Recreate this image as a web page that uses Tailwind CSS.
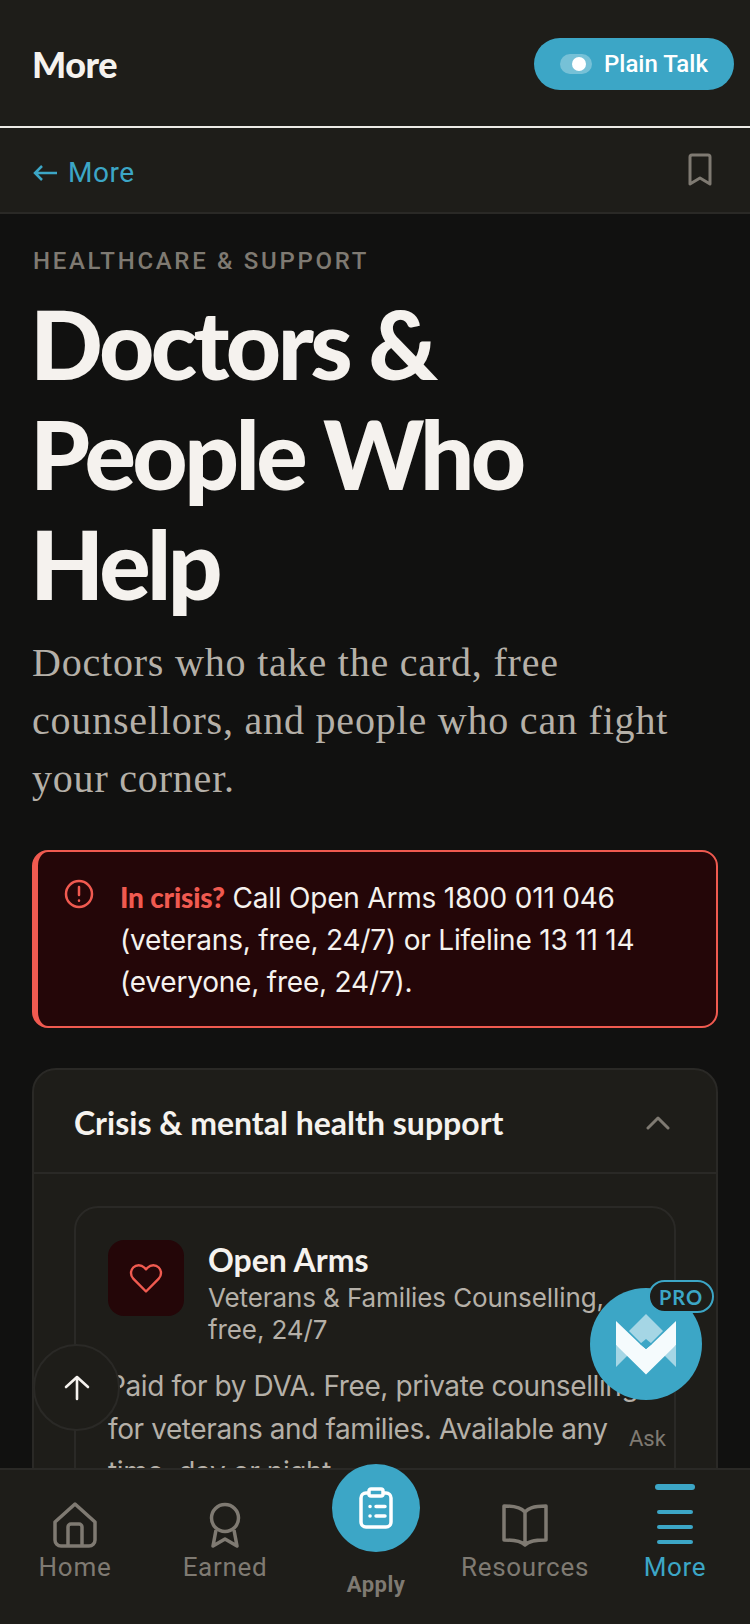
<!DOCTYPE html>
<html lang="en">
<head>
<meta charset="UTF-8">
<meta name="viewport" content="width=device-width, initial-scale=1.0">
<title>Doctors &amp; People Who Help</title>
<script src="https://cdn.jsdelivr.net/npm/@tailwindcss/browser@4"></script>
</head>
<body class="relative h-[1624px] w-[750px] overflow-hidden bg-[#111110] font-['Inter',sans-serif] text-[#f5f2ee]">
  <!-- Top bar -->
  <header class="flex h-[128px] items-center justify-between border-b-2 border-[#eceae6] bg-[#1e1d19] pt-[2px] pl-[32px] pr-[16px]">
    <span class="font-['Lato',sans-serif] text-[36px] font-black tracking-[-0.5px]">More</span>
    <button class="flex h-[52px] w-[200px] items-center gap-[12px] rounded-full bg-[#3ca6c6] pl-[26px] font-['Roboto',sans-serif] text-[24px] font-medium text-white">
      <span class="flex h-[20px] w-[32px] items-center justify-end rounded-full bg-white/30 pr-[6px]"><span class="h-[14px] w-[14px] rounded-full bg-white"></span></span>
      Plain Talk
    </button>
  </header>

  <!-- Back row -->
  <div class="flex h-[86px] items-center justify-between border-b-2 border-[#2a2926] bg-[#1e1d19] pt-[5px] pl-[33px] pr-[36px]">
    <span class="flex items-center gap-[11px] font-['Roboto',sans-serif] text-[28px] tracking-[0.5px] text-[#3ca6c6]">
      <svg class="h-[18px] w-[24px]" viewBox="0 0 24 18" fill="none" stroke="#3ca6c6" stroke-width="2.500"><path d="M24 9H2M9 2 2 9l7 7"/></svg>
      More
    </span>
    <svg class="mt-[-5px] h-[34px] w-[28px]" viewBox="0 0 28 34" fill="none" stroke="#7f7a72" stroke-width="3" stroke-linejoin="round"><path d="M4 4a2 2 0 0 1 2-2h16a2 2 0 0 1 2 2v27l-10-6-10 6z"/></svg>
  </div>

  <main class="px-[32px] pt-[31px]">
    <p class="pl-[1px] font-['Roboto',sans-serif] text-[24px] leading-[32px] font-medium tracking-[2.7px] text-[#7f7a72]">HEALTHCARE &amp; SUPPORT</p>
    <h1 class="mt-[11px] ml-[-2px] font-['Lato',sans-serif] text-[96px] leading-[110px] font-black tracking-[-3.6px] text-[#f5f2ee]">Doctors &amp; People Who Help</h1>
    <p class="mt-[16px] font-['Liberation_Serif',serif] text-[40px] leading-[58px] tracking-[0.8px] text-[#b5b0a8]">Doctors who take the card, free counsellors, and people who can fight your corner.</p>

    <!-- Crisis alert -->
    <div class="mt-[42px] flex gap-[26px] rounded-[16px] border-2 border-l-[6px] border-[#f05a50] bg-[#240608] pt-[24px] pr-[20px] pb-[23px] pl-[26px]">
      <svg class="mt-[3px] h-[30px] w-[30px] shrink-0" viewBox="0 0 30 30" fill="none" stroke="#f05a50" stroke-width="2.500" stroke-linecap="round"><circle cx="15" cy="15" r="13"/><path d="M15 8v8M15 21.500v.2"/></svg>
      <p class="text-[28px] leading-[42px] tracking-[-0.2px]"><span class="font-['Lato',sans-serif] font-black text-[#f05a50]">In crisis?</span> Call Open Arms 1800 011 046 (veterans, free, 24/7) or Lifeline 13 11 14 (everyone, free, 24/7).</p>
    </div>

    <!-- Accordion -->
    <section class="mt-[40px] rounded-[24px] border-2 border-[#2a2926] bg-[#1e1d19]">
      <div class="flex h-[104px] items-center justify-between border-b-2 border-[#2a2926] pt-[3px] pr-[46px] pl-[40px]">
        <h2 class="font-['Lato',sans-serif] text-[32px] font-bold">Crisis &amp; mental health support</h2>
        <svg class="h-[14px] w-[24px]" viewBox="0 0 24 14" fill="none" stroke="#7f7a72" stroke-width="3" stroke-linecap="round" stroke-linejoin="round"><path d="M2 12 12 2l10 10"/></svg>
      </div>
      <div class="p-[32px_40px]">
        <article class="rounded-[24px] border-2 border-[#2a2926] p-[32px]">
          <div class="flex gap-[24px]">
            <div class="flex h-[76px] w-[76px] shrink-0 items-center justify-center rounded-[16px] bg-[#240608]">
              <svg class="h-[36px] w-[36px]" viewBox="0 0 24 24" fill="none" stroke="#f05a50" stroke-width="1.600" stroke-linejoin="round"><path d="M12 21 3.500 12.400a5.300 5.300 0 0 1 0-7.400 5.100 5.100 0 0 1 7.300 0L12 6.200 13.200 5a5.100 5.100 0 0 1 7.300 0 5.300 5.300 0 0 1 0 7.400z"/></svg>
            </div>
            <div>
              <h3 class="font-['Lato',sans-serif] text-[32px] leading-[40px] font-bold">Open Arms</h3>
              <p class="mt-[2px] text-[26px] leading-[32px] tracking-[-0.1px] text-[#b5b0a8]">Veterans &amp; Families Counselling, free, 24/7</p>
            </div>
          </div>
          <p class="mt-[19px] mr-[-6px] text-[28px] leading-[43px] tracking-[-0.4px] text-[#b5b0a8]">Paid for by DVA. Free, private counselling for veterans and families. Available any time, day or night.</p>
        </article>
      </div>
    </section>
  </main>

  <!-- Scroll to top -->
  <button class="absolute top-[1344px] left-[33px] flex h-[87px] w-[87px] items-center justify-center rounded-full border-2 border-[#2a2926] bg-[#1e1d19]">
    <svg class="h-[26px] w-[26px]" viewBox="0 0 26 26" fill="none" stroke="#f5f2ee" stroke-width="2.600" stroke-linecap="round" stroke-linejoin="round"><path d="M13 24V2M2 12 13 2l11 10"/></svg>
  </button>

  <!-- Ask button -->
  <button class="absolute top-[1288px] left-[590px] flex h-[112px] w-[112px] items-center justify-center rounded-full bg-[#3ca6c6]">
    <svg class="h-[61px] w-[60px]" viewBox="0 0 60 61">
      <path fill="#a5d6e5" d="M30 0 47 17 30 34 13 17z"/>
      <path fill="#a5d6e5" d="M0 31v22l13-13zM60 31v22L47 40z"/>
      <path fill="#f5fbfd" d="M0 7l24 23 6 5 6-5L60 7v24L30 60.500 0 31z"/>
      <path fill="#3ca6c6" d="M30 25l6 5-6 5-6-5z"/>
    </svg>
    <span class="absolute top-[-8px] left-[58px] flex h-[33px] w-[66px] items-center justify-center rounded-full border-2 border-[#3ca6c6] bg-[#1e1d19] font-['Lato',sans-serif] text-[20px] font-bold tracking-[1px] text-[#3ca6c6]">PRO</span>
  </button>
  <span class="absolute top-[1422px] left-[629px] font-['Roboto',sans-serif] text-[22px] text-[#7f7a72]">Ask</span>

  <!-- Bottom nav -->
  <nav class="absolute right-0 bottom-0 left-0 grid h-[156px] grid-cols-5 border-t-2 border-[#2a2926] bg-[#1e1d19] font-['Roboto',sans-serif] text-[26px] font-[450] tracking-[0.7px] text-[#7f7a72]">
    <a class="flex flex-col items-center pt-[32px]">
      <svg class="h-[46px] w-[44px]" viewBox="0 0 44 46" fill="none" stroke="#7f7a72" stroke-width="3.500" stroke-linejoin="round"><path d="M2 20 22 2l20 18v18a6 6 0 0 1-6 6H8a6 6 0 0 1-6-6z"/><path d="M15 44V25a3 3 0 0 1 3-3h8a3 3 0 0 1 3 3v19"/></svg>
      <span>Home</span>
    </a>
    <a class="flex flex-col items-center pt-[32px]">
      <svg class="h-[46px] w-[32px]" viewBox="0 0 32 46" fill="none" stroke="#7f7a72" stroke-width="3.500" stroke-linejoin="round"><circle cx="16" cy="16" r="13.500"/><path d="M7 28 4 44l12-7 12 7-3-16"/></svg>
      <span>Earned</span>
    </a>
    <a class="ml-[2px] flex flex-col items-center">
      <span class="mt-[-6px] flex h-[88px] w-[88px] items-center justify-center rounded-full bg-[#3ca6c6]">
        <svg class="h-[42px] w-[34px]" viewBox="0 0 34 42" fill="none" stroke="#fff" stroke-width="3.500" stroke-linecap="round" stroke-linejoin="round"><rect x="2" y="6" width="30" height="34" rx="5"/><rect x="10" y="2" width="14" height="7" rx="2" fill="#3ca6c6"/><path d="M11 19.500h.1M11 29h.1M17 19.500h9M17 29h9"/></svg>
      </span>
      <span class="mt-[16px] text-[22px] font-bold tracking-[0.5px]">Apply</span>
    </a>
    <a class="flex flex-col items-center pt-[34px]">
      <svg class="h-[44px] w-[46px]" viewBox="0 0 46 44" fill="none" stroke="#7f7a72" stroke-width="3.500" stroke-linejoin="round"><path d="M23 8c-3-3-7-6-21-6v34c14 0 18 2 21 5 3-3 7-5 21-5V2C30 2 26 5 23 8zM23 8v34"/></svg>
      <span>Resources</span>
    </a>
    <a class="relative flex flex-col items-center pt-[40px] text-[#3ca6c6]">
      <span class="absolute top-[14px] h-[6px] w-[40px] rounded-full bg-[#3ca6c6]"></span>
      <span class="flex w-[36px] flex-col gap-[11px]">
        <span class="h-[4px] rounded-full bg-[#3ca6c6]"></span>
        <span class="h-[4px] rounded-full bg-[#3ca6c6]"></span>
        <span class="h-[4px] rounded-full bg-[#3ca6c6]"></span>
      </span>
      <span class="mt-[4px]">More</span>
    </a>
  </nav>
</body>
</html>
